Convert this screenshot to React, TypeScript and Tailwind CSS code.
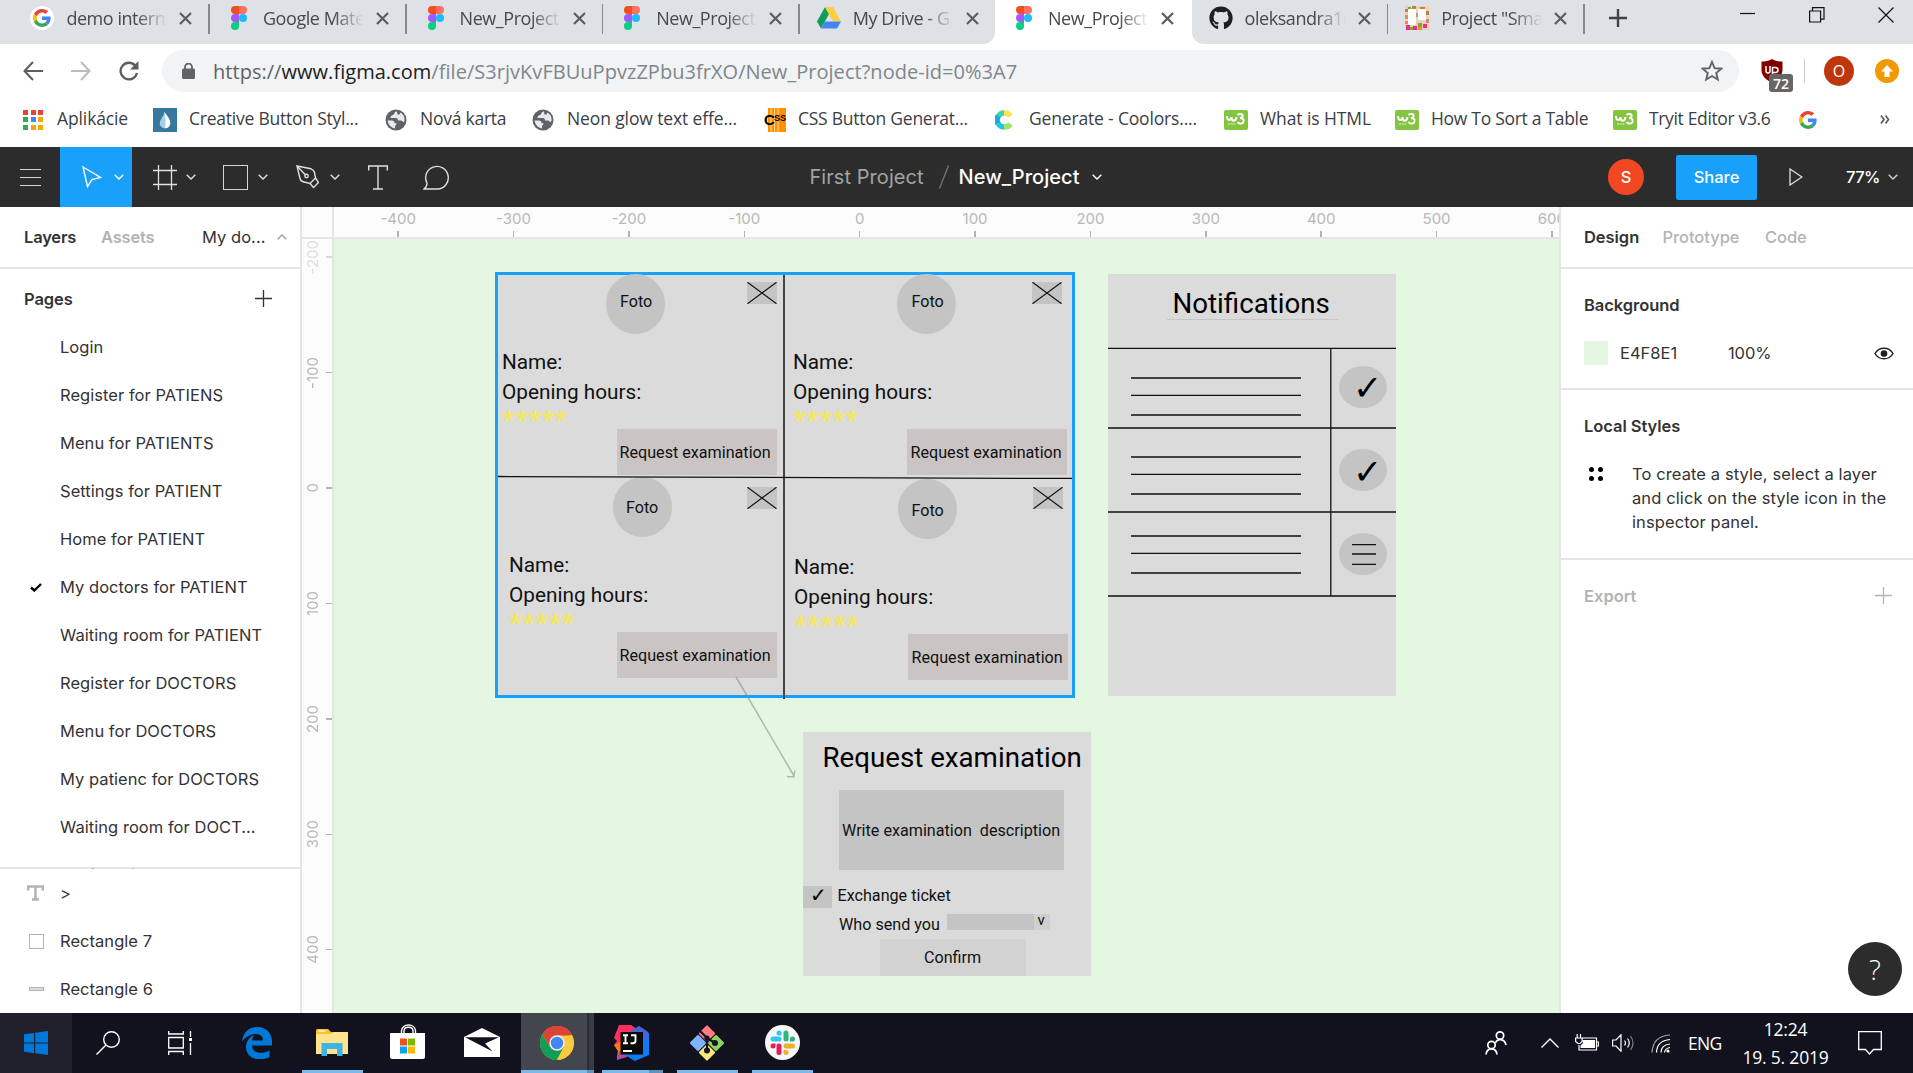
import React from "react";
import { FaGithub } from "react-icons/fa";

const SEGOE = "font-['Open_Sans','Noto_Sans',sans-serif]";

/* ---------- logos ---------- */

const GoogleG = ({ className = "" }: { className?: string }) => (
  <svg viewBox="0 0 48 48" className={className}>
    <path fill="#EA4335" d="M24 9.5c3.5 0 6.700 1.200 9.200 3.600l6.900-6.900C35.900 2.400 30.500 0 24 0 14.600 0 6.500 5.400 2.600 13.200l8 6.200C12.400 13.700 17.700 9.500 24 9.500z" />
    <path fill="#4285F4" d="M47 24.550c0-1.600-.150-3.100-.400-4.550H24v9h12.900c-.600 3-2.200 5.500-4.800 7.200l7.700 6C44.400 38 47 31.800 47 24.550z" />
    <path fill="#FBBC05" d="M10.500 28.600c-.500-1.450-.760-3-.760-4.600s.270-3.150.760-4.600l-8-6.200C.920 16.500 0 20.100 0 24s.920 7.500 2.600 10.800l7.900-6.200z" />
    <path fill="#34A853" d="M24 48c6.500 0 11.900-2.130 15.900-5.800l-7.700-6c-2.200 1.450-4.900 2.300-8.200 2.300-6.300 0-11.600-4.200-13.500-9.900l-8 6.200C6.500 42.600 14.600 48 24 48z" />
  </svg>
);

const FigmaLogo = () => (
  <svg viewBox="0 0 16 24" preserveAspectRatio="none" className="w-4 h-6">
    <path fill="#F24E1E" d="M4 0h4v8H4a4 4 0 0 1 0-8z" />
    <path fill="#FF7262" d="M8 0h4a4 4 0 0 1 0 8H8z" />
    <path fill="#A259FF" d="M4 8h4v8H4a4 4 0 0 1 0-8z" />
    <circle fill="#1ABCFE" cx="12" cy="12" r="4" />
    <path fill="#0ACF83" d="M4 16h4v4a4 4 0 1 1-4-4z" />
  </svg>
);

const DriveLogo = () => (
  <svg viewBox="0 0 24 22" className="w-6 h-[22px]">
    <path fill="#0F9D58" d="M8 0 0 14.500 4 21.500 12 7z" />
    <path fill="#FFCD40" d="M8 0h8l8 14.500h-8z" />
    <path fill="#4285F4" d="M8 14.500h16l-4 7H4z" />
  </svg>
);

const TrelloPicture = () => (
  <svg viewBox="0 0 24 24" className="w-6 h-6">
    <rect width="24" height="24" fill="#e8d3b4" />
    <path d="M0 3h3v3H0zM7 0h4v3H7zM15 1h5v3h-5zM21 5h3v4h-3z" fill="#b98546" />
    <path d="M0 9h3v4H0zM21 13h3v4h-3zM11 7h2v4h-2z" fill="#dd8a6b" />
    <path d="M1 19h4v5H1zM8 20h4v4H8zM18 18h4v4h-4z" fill="#e92c8e" />
    <path d="M5 21h3v3H5zM13 17h4v4h-4zM3 1h3v2H3z" fill="#7fa33a" />
    <path d="M13 21h4v3h-4zM0 15h3v3H0z" fill="#f08b2c" />
    <rect x="3" y="3" width="8" height="16" rx="1" fill="#fff" />
    <rect x="13" y="3" width="8" height="11" rx="1" fill="#fff" />
  </svg>
);

const Globe = () => (
  <svg viewBox="0 0 22 22" className="w-[22px] h-[22px]">
    <circle cx="11" cy="11" r="10.500" fill="#5f6368" />
    <path d="M12 2.500c-3 0-2 2.500-4 3.500s-2.500 1-2.500 3H11c1.500 0 2 1 2 2.500h3c1 0 1.500.800 2 1.800l1.500-1.300a8.500 8.500 0 0 0-4-8.500l-1 2h-2z" fill="#e9eaeb" />
    <path d="M2.600 11.500h4c2 0 3 1 3 2.800h2c0 2-1.600 1.700-1.600 3.200v2a8.500 8.500 0 0 1-7.400-8z" fill="#e9eaeb" />
  </svg>
);

const W3 = () => (
  <div className="flex h-5 w-6 items-center justify-center rounded-[2px] bg-[#84c441]">
    <svg viewBox="0 0 20 16" className="h-4 w-5" fill="none" stroke="#fff" strokeWidth="2">
      <path d="M1 4c0 5 4 5 4.500 1 0 5 4.500 5 5 0" />
      <path d="M11.500 3c2-2 6-1 5 1.500-.500 1-1.500 1.500-2.500 1.500 2.500 0 4 1 3.500 3.500-.600 2.500-4.500 3-6 .500" />
      <path d="M2 12h8" strokeWidth="1" strokeDasharray="2 .6" opacity=".8" />
    </svg>
  </div>
);

const AppsGrid = () => (
  <div className="grid grid-cols-3 gap-x-[2.500px] gap-y-[2.500px]">
    {["bg-[#ea4335]", "bg-[#ea4335]", "bg-[#ea4335]", "bg-[#34a853]", "bg-[#4285f4]", "bg-[#f4a70b]", "bg-[#34a853]", "bg-[#f4a70b]", "bg-[#f4a70b]"].map((c, i) => (
      <i key={i} className={`h-[5px] w-[5px] ${c}`} />
    ))}
  </div>
);

const Drop = () => (
  <svg viewBox="0 0 24 24" className="h-6 w-6">
    <rect width="24" height="24" fill="#37799e" />
    <path d="M11.500 4c2.500 4 6 7.500 5.800 11.500-.200 3-2.500 4.800-5.200 4.800s-5.300-2-5.300-5C6.800 11.500 11 8 11.500 4z" fill="#a9d0e6" />
    <path d="M11.500 4c2.500 4 6 7.500 5.800 11.500-.200 3-2.500 4.800-5.200 4.800C13 14 12.500 9 11.500 4z" fill="#fff" />
  </svg>
);

const CssGen = () => (
  <div className="relative flex h-6 w-[22px] justify-end">
    <svg viewBox="0 0 18 24" className="h-6 w-[18px]">
      <rect width="18" height="24" fill="#ff9100" />
      <path d="M3 0v24M6.500 0v24M10 0v24" stroke="#ffd9a0" strokeWidth="1" />
    </svg>
    <span className="absolute left-0 top-[3px] font-['Liberation_Sans',sans-serif] text-[15px] font-bold leading-[18px] text-black">C</span>
    <span className="absolute left-[10px] top-[5px] font-['Liberation_Sans',sans-serif] text-[9px] font-bold leading-[10px] text-black">SS</span>
  </div>
);

const Coolors = () => (
  <svg viewBox="0 0 18 20" className="h-5 w-[18px]" fill="none" strokeWidth="5.500">
    <path d="M15.500 6A6.800 6.800 0 0 0 9 3" stroke="#ffe14d" />
    <path d="M9 3a6.500 7 0 0 0-6 4" stroke="#3ed6a0" />
    <path d="M3.300 6a6.500 7 0 0 0 0 8" stroke="#18a8e8" />
    <path d="M3 13a6.500 7 0 0 0 6 4" stroke="#1fc8dc" />
    <path d="M15.500 14A6.800 6.800 0 0 1 9 17" stroke="#9ee66a" />
  </svg>
);

/* ---------- browser ---------- */

const Close = () => (
  <svg viewBox="0 0 13 13" className="h-[13px] w-[13px]" stroke="#5a5d61" strokeWidth="2.200">
    <path d="M1 1l11 11M12 1 1 12" />
  </svg>
);

const Tab = ({ icon, title, sep = true, active = false }: { icon: React.ReactNode; title: string; sep?: boolean; active?: boolean }) => (
  <div className="relative flex h-11 w-[196.600px] shrink-0 items-center pb-2 pl-[17px]">
    <div className="flex w-6 justify-center">{icon}</div>
    <div className={`relative ml-3 w-[101px] overflow-hidden whitespace-nowrap text-[18px] tracking-[-0.450px] text-[#45484c] [mask-image:linear-gradient(to_right,black_70%,transparent)] ${SEGOE}`}>{title}</div>
    <div className="ml-3"><Close /></div>
    {sep && !active && <div className="absolute right-0 top-1 h-[30px] w-[1.500px] bg-[#86898d]" />}
  </div>
);

const Bookmark = ({ icon, label, iw, w, tr }: { icon: React.ReactNode; label: string; iw: string; w: string; tr: string }) => (
  <div className={`flex shrink-0 items-center ${w}`}>
    <div className={`shrink-0 ${iw}`}>{icon}</div>
    <span className={`-mt-[3px] whitespace-nowrap text-[17.500px] leading-6 text-[#3c4043] ${tr}`}>{label}</span>
  </div>
);

const Browser = () => (
  <header className="bg-white">
    <div className="flex h-11">
      <div className="flex w-[995px] shrink-0 rounded-br-[12px] bg-[#dee1e6] pl-[13.400px]">
        <Tab icon={<div className="flex h-6 w-6 items-center justify-center rounded-full bg-white"><GoogleG className="h-[18px] w-[18px]" /></div>} title="demo interne" />
        <Tab icon={<FigmaLogo />} title="Google Mate" />
        <Tab icon={<FigmaLogo />} title="New_Project" />
        <Tab icon={<FigmaLogo />} title="New_Project" />
        <Tab icon={<DriveLogo />} title="My Drive - G" sep={false} />
      </div>
      <Tab icon={<FigmaLogo />} title="New_Project" active />
      <div className="flex flex-1 rounded-bl-[12px] bg-[#dee1e6]">
        <Tab icon={<FaGithub className="h-6 w-6 text-[#1b1f23]" />} title="oleksandra1r" />
        <Tab icon={<TrelloPicture />} title={'Project "Sma'} />
        <svg viewBox="0 0 18 18" className="ml-6 mt-[9px] h-[18px] w-[18px]" stroke="#3f4246" strokeWidth="2.400"><path d="M9 0v18M0 9h18" /></svg>
        <div className="ml-auto mr-[19px] mt-[7px] flex gap-[53px]">
          <svg viewBox="0 0 16 16" className="h-4 w-4" stroke="#111" strokeWidth="1.200"><path d="M0 6.500h15" /></svg>
          <svg viewBox="0 0 16 16" className="h-4 w-4" fill="none" stroke="#111" strokeWidth="1.200"><path d="M.6 4h11v11H.6zM3.500 4V.6h11.500v11.500h-3.400" /></svg>
          <svg viewBox="0 0 16 16" className="h-4 w-4" stroke="#111" strokeWidth="1.200"><path d="M.5.5l15 15M15.500.5l-15 15" /></svg>
        </div>
      </div>
    </div>

    <div className="flex h-12 items-center pt-[6px]">
      <svg viewBox="0 0 20 20" className="ml-[23px] h-5 w-5" fill="none" stroke="#5a5d61" strokeWidth="2"><path d="M20 10H2M10 1 1.500 10l8.500 9" /></svg>
      <svg viewBox="0 0 20 20" className="ml-7 h-5 w-5" fill="none" stroke="#babcbe" strokeWidth="2"><path d="M0 10h18M10 1l8.500 9-8.500 9" /></svg>
      <svg viewBox="0 0 22 20" className="ml-[27px] h-5 w-[22px]" fill="none" stroke="#5a5d61" strokeWidth="2.300"><path d="M17.500 5A8.300 8.300 0 1 0 19 12" /><path d="M20.500 0v8.500H12z" fill="#5a5d61" stroke="none" /></svg>
      <div className="ml-[22px] flex h-[42px] w-[1577px] items-center rounded-full bg-[#f1f3f4] pl-5">
        <svg viewBox="0 0 13 16" className="h-4 w-[13px]"><rect y="5.500" width="13" height="10.500" rx="1.500" fill="#5f6368" /><path d="M3 6V4a3.500 3.500 0 0 1 7 0v2" fill="none" stroke="#5f6368" strokeWidth="1.800" /></svg>
        <span className={`ml-[18px] mt-px whitespace-nowrap text-[20px] leading-7 tracking-[0.035px] text-[#80868b] ${SEGOE}`}>
          <span className="text-[#5f6368]">https://</span><span className="text-[#202124]">www.figma.com</span>/file/S3rjvKvFBUuPpvzZPbu3frXO/New_Project?node-id=0%3A7
        </span>
        <svg viewBox="0 0 22 22" className="ml-auto mr-[16px] h-[22px] w-[22px]" fill="none" stroke="#5f6368" strokeWidth="1.900"><path d="M11 2l2.600 6.200 6.700.500-5.100 4.300 1.600 6.500L11 16l-5.800 3.500 1.600-6.500L1.700 8.700l6.700-.500z" /></svg>
      </div>
      <div className="relative ml-[22px] h-6 w-[22px]">
        <svg viewBox="0 0 22 24" className="h-6 w-[22px]"><path d="M11 0c3 2 7 2.500 10.500 2.500V11c0 6-5 10-10.500 13C5.500 21 .5 17 .5 11V2.500C4 2.500 8 2 11 0z" fill="#800000" /><path d="M5 7v5a2 2 0 0 0 4 0V7M11.500 17V8.500h3a2.200 2.200 0 0 1 0 5h-3" fill="none" stroke="#fff" strokeWidth="1.500" /></svg>
        <div className={`absolute left-2 top-[15px] flex h-[18px] w-6 items-center justify-center rounded-[3px] bg-[#666] text-[14px] font-semibold text-white ${SEGOE}`}>72</div>
      </div>
      <div className="ml-[21px] h-6 w-px bg-[#c9cbce]" />
      <div className={`ml-[19px] flex h-[30px] w-[30px] items-center justify-center rounded-full bg-[#bf360c] text-[16px] text-white ${SEGOE}`}>O</div>
      <div className="ml-[21px] flex h-6 w-6 items-center justify-center rounded-full bg-[#f29900]">
        <svg viewBox="0 0 12 12" className="h-3 w-3" fill="#fff"><path d="M6 0l6 6.500H8.500V12h-5V6.500H0z" /></svg>
      </div>
    </div>

    <div className={`flex h-[55px] items-center pl-[23px] ${SEGOE}`}>
      <Bookmark icon={<AppsGrid />} label="Aplikácie" iw="w-[34px] [&>div]:w-5" w="w-[130px]" tr="tracking-[-0.120px]" />
      <Bookmark icon={<Drop />} label="Creative Button Styl..." iw="w-9" w="w-[232px]" tr="tracking-[-0.230px]" />
      <Bookmark icon={<Globe />} label="Nová karta" iw="w-[35px]" w="w-[147px]" tr="tracking-[-0.250px]" />
      <Bookmark icon={<Globe />} label="Neon glow text effe..." iw="w-[35px]" w="w-[232px]" tr="tracking-[-0.120px]" />
      <Bookmark icon={<CssGen />} label="CSS Button Generat..." iw="w-[34px]" w="w-[231px]" tr="tracking-[-0.250px]" />
      <Bookmark icon={<Coolors />} label="Generate - Coolors...." iw="w-[34px]" w="w-[229px]" tr="tracking-[-0.170px]" />
      <Bookmark icon={<W3 />} label="What is HTML" iw="w-9" w="w-[171px]" tr="tracking-[-0.100px]" />
      <Bookmark icon={<W3 />} label="How To Sort a Table" iw="w-9" w="w-[218px]" tr="tracking-[-0.300px]" />
      <Bookmark icon={<W3 />} label="Tryit Editor v3.6" iw="w-9" w="w-[186px]" tr="tracking-[-0.350px]" />
      <GoogleG className="h-[18px] w-[18px]" />
      <svg viewBox="0 0 10 9" className="ml-[63px] h-[9px] w-[10px]" fill="none" stroke="#5a5d61" strokeWidth="1.700"><path d="M1 .5l3 4-3 4M5.500.5l3 4-3 4" /></svg>
    </div>
  </header>
);

/* ---------- figma toolbar ---------- */

const Chevron = ({ className = "" }: { className?: string }) => (
  <svg viewBox="0 0 10 6" className={`h-[6px] w-[10px] ${className}`} fill="none" stroke="currentColor" strokeWidth="1.400"><path d="M.7.7 5 5 9.300.7" /></svg>
);

const Toolbar = () => (
  <div className="flex h-[60px] items-center bg-[#2c2c2c] text-[#e0e0e0]">
    <div className="flex w-[60px] flex-col gap-[7px] pl-5">
      <i className="h-px w-[21px] bg-[#d5d5d5]" /><i className="h-px w-[21px] bg-[#d5d5d5]" /><i className="h-px w-[21px] bg-[#d5d5d5]" />
    </div>
    <div className="flex h-full w-[72px] items-center bg-[#18a0fb] pl-[22px] text-white">
      <svg viewBox="0 0 20 22" className="h-[22px] w-5" fill="none" stroke="currentColor" strokeWidth="1.400"><path d="M1 1l17.500 10.500-8.500 2L5.500 20.500z" /></svg>
      <Chevron className="ml-3" />
    </div>
    <svg viewBox="0 0 24 25" className="ml-[21px] h-[25px] w-6" fill="none" stroke="currentColor" strokeWidth="1.300"><path d="M5.500 0v25M18.500 0v25M0 5.500h24M0 19.500h24" /></svg>
    <Chevron className="ml-[9px]" />
    <div className="ml-[27px] h-[25px] w-[25px] border-[1.500px] border-[#d5d5d5]" />
    <Chevron className="ml-[10px]" />
    <svg viewBox="0 0 23 24" className="ml-7 h-6 w-[23px]" fill="none" stroke="currentColor" strokeWidth="1.400"><path d="M1 1l3 12.500c.5 2 1.500 3 4 3.500l6 1.500 5.500-5.500-1-5.500c-.4-2-1.500-3-3.500-3.700z" /><path d="M1.500 1.500 9.500 10" /><circle cx="10.500" cy="11" r="1.700" /><path d="M14 18.500l3.500 4 5-5-3-4.500" /></svg>
    <Chevron className="ml-[11px]" />
    <svg viewBox="0 0 20 25" className="ml-7 h-[25px] w-5" fill="none" stroke="currentColor" strokeWidth="1.400"><path d="M.7 5.500V1h18.600v4.500M10 1v23M5 24h10" /></svg>
    <svg viewBox="0 0 27 25" className="ml-[35px] h-[25px] w-[27px]" fill="none" stroke="currentColor" strokeWidth="1.400"><path d="M1 24c2-1.500 3-3.500 3-6A11.300 11.300 0 1 1 14.500 24z" /></svg>

    <div className="ml-[359.500px] flex items-center whitespace-nowrap text-[20px]">
      <span className="w-[129px] tracking-[0.060px] text-[#a3a3a3]">First Project</span>
      <svg viewBox="0 0 10 24" className="h-6 w-[10px]" stroke="#6f6f6f" strokeWidth="1.400"><path d="M9.500.5l-9 23" /></svg>
      <span className="ml-[10px] w-[124px] font-medium tracking-[0.050px] text-white">New_Project</span>
      <Chevron className="ml-[9px] text-white" />
    </div>

    <div className="ml-auto flex items-center text-[16.500px] font-medium text-white">
      <div className="flex h-9 w-9 items-center justify-center rounded-full bg-[#f24822]">S</div>
      <div className="ml-8 flex h-[45px] w-[81px] items-center justify-center rounded-[2px] bg-[#18a0fb]">Share</div>
      <svg viewBox="0 0 14 18" className="ml-8 h-[18px] w-[14px]" fill="none" stroke="#e0e0e0" strokeWidth="1.300"><path d="M1 1l12 8-12 8z" /></svg>
      <span className="ml-[43px] w-[33px] tracking-[-0.600px]">77%</span>
      <Chevron className="ml-[9px] mr-[15px] text-[#cfcfcf]" />
    </div>
  </div>
);

/* ---------- left panel ---------- */

const pages = [
  "Login", "Register for PATIENS", "Menu for PATIENTS", "Settings for PATIENT", "Home for PATIENT",
  "My doctors for PATIENT", "Waiting room for PATIENT", "Register for DOCTORS", "Menu for DOCTORS",
  "My patienc for DOCTORS", "Waiting room for DOCT...", "Settings for DOCTORS",
];

const LeftPanel = () => (
  <aside className="flex w-[302px] shrink-0 flex-col border-r-2 border-[#e5e5e5] bg-white text-[16.500px] tracking-[0.040px] text-[#333]">
    <div className="flex h-[62px] shrink-0 items-center border-b-2 border-[#e5e5e5] pl-6">
      <span className="w-[77px] font-semibold tracking-[-0.200px]">Layers</span>
      <span className="w-[101px] font-semibold tracking-[-0.200px] text-[#b3b3b3]">Assets</span>
      <span className="w-[75px]">My do...</span>
      <Chevron className="rotate-180 text-[#a0a0a0]" />
    </div>
    {/* the divider lies under the last, partly scrolled row */}
    <div className="h-[600px] shrink-0 overflow-hidden bg-[linear-gradient(to_top,#e5e5e5_2px,transparent_2px)]">
      <div className="flex h-[54px] items-center pl-6 pt-[6px]">
        <span className="w-[231px] font-semibold tracking-[-0.100px]">Pages</span>
        <svg viewBox="0 0 17 17" className="-mt-[2px] h-[17px] w-[17px]" stroke="#333" strokeWidth="1.300"><path d="M8.500 0v17M0 8.500h17" /></svg>
      </div>
      {pages.map((p) => (
        <div key={p} className="flex h-12 items-center whitespace-nowrap">
          <div className="w-[60px] pl-[30px]">
            {p.startsWith("My doctors") && <svg viewBox="0 0 12 9" className="h-[9px] w-3" fill="none" stroke="#000" strokeWidth="2.400"><path d="M1 4.500 4.300 7.500 11 1" /></svg>}
          </div>
          {p}
        </div>
      ))}
    </div>
    <div className="flex-1 overflow-hidden">
      <div className="flex h-12 items-center"><span className="w-[60px] pl-[27px]"><svg viewBox="0 0 17 16" className="h-4 w-[17px]" fill="none" stroke="#b3b3b3" strokeWidth="2.500"><path d="M1.200 5.500V1.500h14.600v4M8.500 1.500v13M5 14.500h7" /></svg></span>&gt;</div>
      <div className="flex h-12 items-center"><span className="w-[60px] pl-[29px]"><i className="block h-[15px] w-[15px] border-[1.500px] border-[#b3b3b3]" /></span>Rectangle 7</div>
      <div className="flex h-12 items-center"><span className="w-[60px] pl-[29px]"><i className="block h-1 w-[15px] border border-[#b3b3b3] bg-[#ddd]" /></span>Rectangle 6</div>
    </div>
  </aside>
);

/* ---------- canvas ---------- */

const TextS = "absolute whitespace-pre text-[16.150px] leading-5";
const TextM = "absolute whitespace-pre text-[20.770px] leading-6";

const Cross = ({ className }: { className: string }) => (
  <svg viewBox="0 0 30 22" className={`absolute h-[22px] w-[30px] ${className}`}>
    <rect width="30" height="22" fill="#c4c4c4" /><path d="M.5.3l29 21.400M29.500.3.5 21.700" stroke="#111" strokeWidth="1.200" />
  </svg>
);

type DoctorProps = { circle: string; foto: string; cross: string; name: string; hours: string; stars: string; button: string; request: string };

const Doctor = ({ circle, foto, cross, name, hours, stars, button, request }: DoctorProps) => (
  <>
    <div className={`absolute h-[59.500px] w-[59px] rounded-full bg-[#c4c4c4] ${circle}`} />
    <span className={`${TextS} ${foto}`}>Foto</span>
    <Cross className={cross} />
    <span className={`${TextM} ${name}`}>Name:</span>
    <span className={`${TextM} ${hours}`}>Opening hours:</span>
    <span className={`absolute text-[28.500px] font-medium leading-8 tracking-[0.500px] text-[#f5e65c] ${stars}`}>*****</span>
    <div className={`absolute h-[45.500px] w-[160px] bg-[#cac5c4] ${button}`} />
    <span className={`${TextS} ${request}`}>Request examination</span>
  </>
);

const NoticeLines = ({ className }: { className: string }) => (
  <svg viewBox="0 0 170 40" className={`absolute left-[22.500px] h-10 w-[170px] ${className}`} stroke="#111" strokeWidth="1.300"><path d="M0 1h170M0 18.300h170M0 38h170" /></svg>
);

const Canvas = () => (
  <div className="relative flex-1 overflow-hidden bg-[#e4f8e1] font-[Roboto,sans-serif] text-[#111]">
    {/* doctors frame, canvas origin is the inner corner of the rulers */}
    <div className="absolute left-[161px] top-[33px] h-[426px] w-[580px] border-[3px] border-[#18a0fb] bg-[#dbdbdb]">
      <div className="absolute left-[285px] top-0 h-[424px] w-[1.500px] bg-[#444]" />
      <Doctor circle="left-[107.500px] -top-px" foto="left-[122px] top-[17px]" cross="left-[249px] top-[6.500px]" name="left-[4px] top-[75px]" hours="left-[4px] top-[105px]" stars="left-[4px] top-[129.500px]" button="left-[118.500px] top-[154px]" request="left-[121.500px] top-[167.500px]" />
      <Doctor circle="left-[398.500px] -top-px" foto="left-[413.500px] top-[17px]" cross="left-[533.500px] top-[6.500px]" name="left-[295px] top-[75px]" hours="left-[295px] top-[105px]" stars="left-[295px] top-[129.500px]" button="left-[409px] top-[154px]" request="left-[412.500px] top-[167.500px]" />
      <Doctor circle="left-[114.500px] top-[202px]" foto="left-[128px] top-[222.500px]" cross="left-[249px] top-[212px]" name="left-[11px] top-[278px]" hours="left-[11px] top-[308px]" stars="left-[11px] top-[332.500px]" button="left-[119px] top-[357px]" request="left-[121.500px] top-[370.500px]" />
      <Doctor circle="left-[399.500px] top-[204px]" foto="left-[413.500px] top-[226px]" cross="left-[534.500px] top-[212px]" name="left-[296px] top-[280px]" hours="left-[296px] top-[310px]" stars="left-[296px] top-[335px]" button="left-[410px] top-[359px]" request="left-[413.500px] top-[373px]" />
      <svg viewBox="0 0 574 4" className="absolute left-0 top-[200px] h-1 w-[574px]"><path d="M0 1.500l574 2" stroke="#111" strokeWidth="1.300" /></svg>
    </div>
    <svg viewBox="0 0 62 104" className="absolute left-[400px] top-[437px] h-[104px] w-[62px]" fill="none" stroke="#8a918a" strokeOpacity=".6" strokeWidth="1.500"><path d="M2 1l58 99M53 100.500l7 .5.800-6.500" /></svg>

    {/* notifications frame */}
    <div className="absolute left-[774px] top-[35px] h-[422px] w-[288px] bg-[#dbdbdb]">
      <span className="absolute left-[64.500px] top-[13.500px] text-[27.700px] leading-8 text-black">Notifications</span>
      <div className="absolute left-[59px] top-[45px] h-px w-[171px] bg-[#c6c6c6]" />
      <svg viewBox="0 0 288 250" className="absolute left-0 top-[73px] h-[250px] w-[288px]" stroke="#111" strokeWidth="1.300"><path d="M0 1.300h288M0 81h288M0 165h288M0 249h288M222.800 1v248" /></svg>
      <NoticeLines className="top-[103px]" />
      <NoticeLines className="top-[182px]" />
      <NoticeLines className="top-[261px]" />
      <div className="absolute left-[231px] top-[92px] h-[42px] w-12 rounded-[50%] bg-[#c4c4c4]" />
      <div className="absolute left-[231px] top-[175px] h-[42px] w-12 rounded-[50%] bg-[#c4c4c4]" />
      <div className="absolute left-[231px] top-[259px] h-[42px] w-12 rounded-[50%] bg-[#c4c4c4]" />
      <span className="absolute left-[245px] top-[98px] font-['DejaVu_Sans',sans-serif] text-[35px] leading-8 text-black">✓</span>
      <span className="absolute left-[245px] top-[182px] font-['DejaVu_Sans',sans-serif] text-[35px] leading-8 text-black">✓</span>
      <svg viewBox="0 0 24 22" className="absolute left-[244px] top-[269.500px] h-[22px] w-6" stroke="#111" strokeWidth="1.300"><path d="M0 .7h24M0 10h24M0 20.300h24" /></svg>
    </div>

    {/* request frame */}
    <div className="absolute left-[469px] top-[493px] h-[244px] w-[288px] bg-[#dbdbdb]">
      <span className="absolute left-[19.500px] top-[9.500px] whitespace-nowrap text-[27.700px] leading-8 text-black">Request examination</span>
      <div className="absolute left-9 top-[58px] h-20 w-[225px] bg-[#c4c4c4]" />
      <span className={`${TextS} left-[39px] top-[89px]`}>Write examination  description</span>
      <div className="absolute left-0 top-[154px] h-[22px] w-[29px] bg-[#c4c4c4]" />
      <span className="absolute left-[7px] top-[153px] font-['DejaVu_Sans',sans-serif] text-[20px] leading-5 text-black">✓</span>
      <span className={`${TextS} left-[34.500px] top-[153.500px]`}>Exchange ticket</span>
      <span className={`${TextS} left-9 top-[182.500px]`}>Who send you</span>
      <div className="absolute left-36 top-[181.500px] flex h-4 w-[103px] bg-[#c4c4c4]"><i className="ml-auto w-4 bg-[#d0d0d0]" /></div>
      <span className="absolute left-[234.500px] top-[178px] text-[15px] leading-5">v</span>
      <div className="absolute left-[77px] top-[207px] h-[37px] w-[146px] bg-[#d2d2d2]" />
      <span className={`${TextS} left-[121px] top-[215.500px]`}>Confirm</span>
    </div>
  </div>
);

const Workspace = () => (
  <main className="flex min-w-0 flex-1 flex-col bg-[#fcfcfc] text-[15px] text-[#b8b8b8]">
    <div className="flex h-8 shrink-0">
      <div className="w-8 border-b-2 border-r-2 border-[#e5e5e5]" />
      <div className="flex flex-1 overflow-hidden border-b-2 border-[#e5e5e5] pl-[6.500px]">
        {["-400", "-300", "-200", "-100", "0", "100", "200", "300", "400", "500", "600"].map((n) => (
          <div key={n} className="flex w-[115.380px] shrink-0 flex-col items-center">
            <span className="h-6 leading-[23px]">{n}</span>
            <i className="h-[6px] w-[1.500px] bg-[#b3b3b3]" />
          </div>
        ))}
      </div>
    </div>
    <div className="flex min-h-0 flex-1">
      <div className="w-8 shrink-0 overflow-hidden border-r-2 border-[#e5e5e5]">
        <div className="-mt-[39.500px]">
          {["-200", "-100", "0", "100", "200", "300", "400"].map((n, i) => (
            <div key={n} className={`flex h-[115.430px] items-center ${i === 0 ? "opacity-45" : ""}`}>
              <span className="w-[22px] rotate-180 text-center leading-[22px] [writing-mode:vertical-rl]">{n}</span>
              <i className="ml-auto h-[1.500px] w-[6px] bg-[#b3b3b3]" />
            </div>
          ))}
        </div>
      </div>
      <Canvas />
    </div>
  </main>
);

/* ---------- right panel ---------- */

const RightPanel = () => (
  <aside className="relative w-[354px] shrink-0 border-l-2 border-[#e5e5e5] bg-white text-[16.500px] text-[#333]">
    <div className="flex h-[62px] items-center border-b-2 border-[#e5e5e5] pl-[23px] tracking-[-0.050px] text-[#b3b3b3]">
      <span className="w-[78.500px] font-semibold text-[#333]">Design</span>
      <span className="w-[102.500px] font-medium">Prototype</span>
      <span className="font-medium">Code</span>
    </div>
    <section className="h-[121px] border-b-2 border-[#e5e5e5] pl-[23px] pt-6">
      <h3 className="font-semibold leading-6 tracking-[-0.050px]">Background</h3>
      <div className="mt-6 flex items-center leading-6">
        <i className="h-6 w-6 rounded-[1px] bg-[#e4f8e1]" />
        <span className="ml-3 w-[108px]">E4F8E1</span>
        <span className="w-[146px] tracking-[-0.100px]">100%</span>
        <svg viewBox="0 0 20 13" className="h-[13px] w-5" fill="none" stroke="#222" strokeWidth="1.500"><path d="M1 6.500C5-.600 15-.600 19 6.500 15 13.600 5 13.600 1 6.500z" /><circle cx="10" cy="6.500" r="2.600" fill="#222" /></svg>
      </div>
    </section>
    <section className="h-[170px] border-b-2 border-[#e5e5e5] pl-[23px] pt-6">
      <h3 className="font-semibold leading-6 tracking-[-0.050px]">Local Styles</h3>
      <div className="mt-6 flex">
        <div className="ml-[5px] mt-[5px] grid h-[14px] w-[43px] grid-cols-[9px_5px] gap-y-1">
          <i className="h-[5px] w-[5px] rounded-full bg-black" /><i className="h-[5px] w-[5px] rounded-full bg-black" /><i className="h-[5px] w-[5px] rounded-full bg-black" /><i className="h-[5px] w-[5px] rounded-full bg-black" />
        </div>
        <p className="whitespace-nowrap leading-6 tracking-[0.100px]">To create a style, select a layer<br />and click on the style icon in the<br />inspector panel.</p>
      </div>
    </section>
    <div className="flex items-center pl-[23px] pt-6 leading-6 text-[#b3b3b3]">
      <span className="w-[291px] font-semibold">Export</span>
      <svg viewBox="0 0 17 17" className="-mt-[2px] h-[17px] w-[17px]" stroke="#b3b3b3" strokeWidth="1.300"><path d="M8.500 0v17M0 8.500h17" /></svg>
    </div>
    <div className="absolute bottom-[17px] right-[11px] flex h-[54px] w-[54px] items-center justify-center rounded-full bg-[#2c2c2c] font-['Open_Sans',sans-serif] text-[28px] font-light text-white">?</div>
  </aside>
);

/* ---------- taskbar ---------- */

const Slot = ({ children, line }: { children: React.ReactNode; line?: React.ReactNode }) => (
  <div className="relative flex h-full w-[75px] items-center justify-center pb-px">{children}{line}</div>
);
const Line = () => <i className="absolute bottom-0 left-[7px] h-[3px] w-[61px] bg-[#76b9ed]" />;

const Taskbar = () => (
  <footer className={`flex h-[60px] items-center bg-[#11121e] text-white ${SEGOE}`}>
    <div className="flex h-full w-[72px] items-center justify-center bg-[#1f202c]">
      <svg viewBox="0 0 24 24" className="h-6 w-6" fill="#0078d7"><path d="M0 3.300l10-1.400v9.600H0zM11.200 1.700 24 0v11.500H11.200zM0 12.600h10v9.600L0 20.800zM11.200 12.600H24V24l-12.800-1.700z" /></svg>
    </div>
    <div className="flex w-[72px] justify-center"><svg viewBox="0 0 24 24" className="h-6 w-6" fill="none" stroke="#fff" strokeWidth="1.400"><circle cx="15.500" cy="8.500" r="7.800" /><path d="M10 14 .5 23.500" /></svg></div>
    <div className="flex w-[75.500px] pl-6"><svg viewBox="0 0 24 24" className="h-6 w-6" fill="none" stroke="#fff" strokeWidth="1.300"><path d="M.7 0v3h14.600V0M.7 6.500h14.600v10.500H.7zM.7 24v-3.500h14.600V24M22.500 0v6M22.500 12v12" /><path d="M21 7h3v3h-3z" fill="#fff" stroke="none" /></svg></div>
    <Slot>
      <svg viewBox="0 0 30 32" className="h-8 w-[30px]" fill="#0078d7"><path d="M0 14.500C1 5.500 7 0 15.500 0 24.500 0 30 6.500 30 14.500V18.500H10c.3 9 11.500 8.500 17.500 5v6.700C17 35 4 31.500 4 20 4 14 7.500 10 12.500 7.700 11 9.500 10.300 11.500 10.100 13.500H21C21 4.500 7 5 0 14.500z" /></svg>
    </Slot>
    <Slot line={<Line />}>
      <svg viewBox="0 0 32 28" className="h-7 w-8"><path d="M0 1.500Q0 0 1.500 0H12l3 3h15.500Q32 3 32 4.500V9H0z" fill="#fbc02d" /><path d="M0 5h15l3-2h14v22H0z" fill="#ffe38d" /><path d="M2.500 2h7" stroke="#fff" strokeWidth="1.200" /><path d="M5.500 27V14h21v13H21v-7H11v7z" fill="#3db4e6" /></svg>
    </Slot>
    <Slot>
      <svg viewBox="0 0 35 35" className="mb-[2px] h-[35px] w-[35px]"><path d="M11.500 9V7c0-8 14-8 14 0v2M14 9V7c0-5 9-5 9 0v2" fill="none" stroke="#fff" strokeWidth="1.400" /><path d="M0 9h35v24q0 2-2 2H2q-2 0-2-2z" fill="#fff" /><path d="M10 14.500h7v7h-7z" fill="#f25022" /><path d="M18 14.500h7v7h-7z" fill="#7fba00" /><path d="M10 22.500h7v7h-7z" fill="#00a4ef" /><path d="M18 22.500h7v7h-7z" fill="#ffb900" /></svg>
    </Slot>
    <Slot>
      <svg viewBox="0 0 36 29" className="h-[29px] w-9"><path d="M0 9 18 0l18 9v20H0z" fill="#fff" /><path d="M1 9.300h34L21 15.500l7.500 8z" fill="#11121e" /></svg>
    </Slot>
    <Slot line={<><i className="absolute left-px top-0 h-full w-[66px] bg-[#43454f]" /><i className="absolute left-[67px] top-0 h-full w-[2px] bg-[#2a2c37]" /><i className="absolute left-[69px] top-0 h-full w-[5px] bg-[#393b46]" /><i className="absolute bottom-0 left-px h-[3px] w-[66px] bg-[#76b9ed]" /><i className="absolute bottom-0 left-[67px] h-[3px] w-[7px] bg-[#5f93bd]" /></>}>
      <svg viewBox="0 0 34 34" className="relative z-10 h-[34px] w-[34px]"><circle cx="17" cy="17" r="17" fill="#fbc02d" /><path d="M2.300 8.500A17 17 0 0 1 31.700 8.500L17 17z" fill="#db4437" /><path d="M17 9h15.200A17 17 0 0 0 2.300 8.500L10 21z" fill="#db4437" /><path d="M2.300 8.500A17 17 0 0 0 17 34l7-13-14 0z" fill="#0f9d58" /><path d="M24 20.500 17 34A17 17 0 0 0 32.200 9.500H17z" fill="#fdc93f" /><circle cx="17" cy="17" r="7.700" fill="#f1f1f1" /><circle cx="17" cy="17" r="6.200" fill="#4285f4" /></svg>
    </Slot>
    <Slot line={<><Line /><i className="absolute bottom-0 left-[54px] h-[3px] w-[14px] bg-[#5f93bd]" /></>}>
      <svg viewBox="0 0 36 36" className="h-9 w-9"><path d="M5 0h12l6 4-9 26-11 5 1-9-4-6 3-4-3-3z" fill="#fe315d" /><path d="M0 20l8-4 5 10-10 9 1-9z" fill="#f97a12" /><path d="M3 35l2-9 9 3-1 3z" fill="#af4b9a" /><path d="M17 6l8-5 10 7v22l-14 6-10-6z" fill="#0a7cf5" /><path d="M18 7l7-6 9 6-2 8z" fill="#4a63d3" /><rect x="6.500" y="7" width="22.500" height="22.500" fill="#0b0b0b" /><path d="M9 10.200h5M11.500 10.200v8M9 18.200h5M17 10.200h4.500v5.600q0 2.400-2.500 2.400h-2.500" fill="none" stroke="#fff" strokeWidth="1.900" /><path d="M9 26h9" stroke="#fff" strokeWidth="2" /></svg>
    </Slot>
    <Slot line={<Line />}>
      <svg viewBox="0 0 36 36" className="h-9 w-9"><rect x="12" y="2.500" width="12" height="12" rx="1" transform="rotate(45 18 8.500)" fill="#ff7c80" /><rect x="3" y="12" width="12" height="12" rx="1" transform="rotate(45 9 18)" fill="#80b3ff" /><rect x="21" y="12" width="12" height="12" rx="1" transform="rotate(45 27 18)" fill="#8dd35f" /><rect x="12" y="21.500" width="12" height="12" rx="1" transform="rotate(45 18 27.500)" fill="#ffe680" /><path d="M11 6l7 7v13M18 13l8 5" stroke="#151522" strokeWidth="2.200" fill="none" /><circle cx="18" cy="25.500" r="3" fill="#151522" /><circle cx="26" cy="18" r="3" fill="#151522" /><circle cx="18" cy="13" r="2.600" fill="#151522" /></svg>
    </Slot>
    <Slot line={<Line />}>
      <svg viewBox="0 0 35 35" className="h-[35px] w-[35px]"><circle cx="17.500" cy="17.500" r="17.500" fill="#f7f7f7" /><g fill="none" strokeWidth="5" strokeLinecap="round"><path d="M8 14h6" stroke="#36c5f0" /><path d="M21 8v6" stroke="#2eb67d" /><path d="M21 21h6.500" stroke="#ecb22e" /><path d="M14 21v6.500" stroke="#e01e5a" /></g><path d="M16.500 10.500h-2.500a2.500 2.500 0 1 1 2.500-2.500z" fill="#36c5f0" /><path d="M25 16.500V14a2.500 2.500 0 1 1 2.500 2.500z" fill="#2eb67d" /><path d="M18.500 25h2.500a2.500 2.500 0 1 1-2.500 2.500z" fill="#ecb22e" /><path d="M10.500 18.500V21A2.500 2.500 0 1 1 8 18.500z" fill="#e01e5a" /></svg>
    </Slot>

    <div className="ml-auto flex h-full items-center">
      <svg viewBox="0 0 22 24" className="h-6 w-[22px]" fill="none" stroke="#fff" strokeWidth="1.700"><circle cx="15" cy="4.500" r="3.700" /><path d="M10.500 12c1.500-4.500 9-5 10.500 2" /><circle cx="6.500" cy="14" r="3.700" /><path d="M1 23.500c1-7.500 10-7.500 11 0" /></svg>
      <svg viewBox="0 0 18 10" className="ml-[34px] h-[10px] w-[18px]" fill="none" stroke="#fff" strokeWidth="1.400"><path d="M.5 9.500 9 1l8.500 8.500" /></svg>
      <svg viewBox="0 0 24 18" className="ml-4 h-[18px] w-6" fill="none" stroke="#fff" strokeWidth="1.200"><path d="M7 4h14.500v12H4v-5" /><path d="M7.500 6H20v8H5.500v-2.500L8 9z" fill="#fff" stroke="none" /><path d="M22 8h1.500v4H22M.6 4h6.500v3.500L5 9.500H3L.6 7.500zM2.200 4V0M5.500 4V0" /></svg>
      <svg viewBox="0 0 23 18" className="ml-[13px] h-[18px] w-[23px]" fill="none" stroke="#fff" strokeWidth="1.200"><path d="M.6 6H4l5-5.200v16.400L4 12H.6zM12.500 6.500q2 2.500 0 5M15.500 4.500q3.500 4.500 0 9" /><path d="M18.500 2q5 7 0 14" opacity=".45" /></svg>
      <svg viewBox="0 0 20 19" className="ml-4 h-[19px] w-5" fill="none" stroke="#fff" strokeWidth="1.200"><path d="M1 18.500Q2 2 19 1" opacity=".6" /><path d="M5.500 18.500Q6 6.500 19 5.500M10 18.500Q10 11 19 10M13.500 18.500q.5-4 5.500-5" /><circle cx="17" cy="17" r="1.600" fill="#fff" stroke="none" /></svg>
      <span className="ml-[17px] w-[54px] text-[17.500px] tracking-[-0.700px]">ENG</span>
      <div className="w-[87px] whitespace-nowrap text-center text-[17.500px] leading-7 tracking-[-0.200px]"><div>12:24</div><div>19. 5. 2019</div></div>
      <svg viewBox="0 0 24 24" className="ml-[29px] mr-[31px] h-6 w-6" fill="none" stroke="#fff" strokeWidth="1.300"><path d="M.7.700h22.600v17.800H15.500L11.500 23l-4-4.500H.7z" /></svg>
    </div>
  </footer>
);

export default function App() {
  return (
    <div className="flex h-[1073px] w-[1913px] flex-col overflow-hidden font-[Inter,sans-serif]">
      <Browser />
      <Toolbar />
      <div className="flex min-h-0 flex-1">
        <LeftPanel />
        <Workspace />
        <RightPanel />
      </div>
      <Taskbar />
    </div>
  );
}
